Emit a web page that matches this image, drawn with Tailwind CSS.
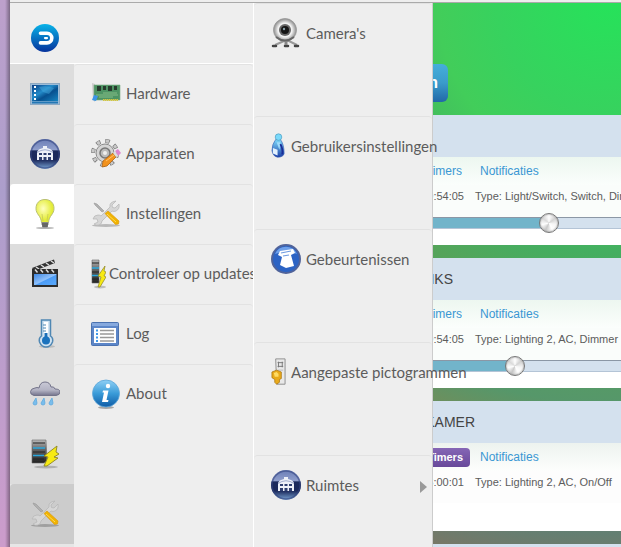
<!DOCTYPE html>
<html lang="nl">
<head>
  <meta charset="UTF-8">
  <meta name="viewport" content="width=device-width, initial-scale=1.0">
  <title>Domoticz</title>
  <script src="https://cdn.jsdelivr.net/npm/@tailwindcss/browser@4"></script>
</head>
<body class="h-screen overflow-hidden flex bg-[#eee] font-['Lato',sans-serif] text-[15px] text-[#5c5c5c]">
  <!-- Shared icons -->
  <svg class="absolute size-0">
    <defs>
      <linearGradient id="g-logo" x2="0" y2="1"><stop stop-color="#08b3e8"/><stop offset="1" stop-color="#06329c"/></linearGradient>
      <linearGradient id="g-screen" x2="1" y2="1"><stop stop-color="#0b3f86"/><stop offset=".4" stop-color="#238ac8"/><stop offset=".6" stop-color="#07508f"/><stop offset="1" stop-color="#1684c0"/></linearGradient>
      <linearGradient id="g-house" x2="0" y2="1"><stop stop-color="#6a7db6"/><stop offset=".35" stop-color="#8e9dcb"/><stop offset=".4" stop-color="#1c2a5c"/><stop offset=".7" stop-color="#1c2a5c"/><stop offset="1" stop-color="#7ba6d6"/></linearGradient>
      <radialGradient id="g-bulb" cx=".4" cy=".4"><stop stop-color="#ffffc0"/><stop offset="1" stop-color="#e3ec38"/></radialGradient>
      <linearGradient id="g-clap" x2="1" y2="1"><stop stop-color="#3f86e0"/><stop offset=".5" stop-color="#8fc1fb"/><stop offset=".55" stop-color="#4c9cf6"/><stop offset="1" stop-color="#5aaafc"/></linearGradient>
      <linearGradient id="g-cloud" x2="0" y2="1"><stop stop-color="#c9c9d6"/><stop offset=".6" stop-color="#b3b3c4"/><stop offset="1" stop-color="#74748c"/></linearGradient>
      <linearGradient id="g-server" x2="0" y2="1"><stop stop-color="#bbb"/><stop offset=".4" stop-color="#666"/><stop offset="1" stop-color="#222"/></linearGradient>
      <linearGradient id="g-info" x2="0" y2="1"><stop stop-color="#8fd0f5"/><stop offset=".5" stop-color="#3a9bd8"/><stop offset="1" stop-color="#0f5ca6"/></linearGradient>
      <radialGradient id="g-cam"><stop stop-color="#bbb"/><stop offset=".6" stop-color="#f4f4f4"/><stop offset="1" stop-color="#8a8a8a"/></radialGradient>
      <linearGradient id="g-user" x2="0" y2="1"><stop stop-color="#7fdcfb"/><stop offset="1" stop-color="#1c3fa8"/></linearGradient>
    </defs>
    <symbol id="i-house" viewBox="0 0 30 30">
      <circle cx="15" cy="15" r="15" fill="url(#g-house)"/>
      <circle cx="15" cy="15" r="14" fill="none" stroke="#34457f" stroke-width="1.5" opacity=".6"/>
      <path d="M7 13Q8 10 13 9V7h4v2q5 1 6 4v8H7z" fill="#eef1f8"/>
      <path d="M9 14h3v2H9zM13.500 14h3v2h-3zM18 14h3v2h-3zM9 18h3v3H9zM13.500 18h3v3h-3zM18 18h3v3h-3z" fill="#2f3f70"/>
      <path d="M7 13.500Q15 8 23 13.500" fill="none" stroke="#8d9bc4" stroke-width=".8"/>
    </symbol>
    <symbol id="i-tools" viewBox="0 0 30 30">
      <ellipse cx="15" cy="26.500" rx="14" ry="1.500" fill="#000" opacity=".22"/>
      <path d="M3 4l3 1 7 7-2 1-7-7z" fill="#b0b0b0" stroke="#999" stroke-width=".6"/>
      <path d="M25 2l-4 4 .5 2.500 2.500.5 4-4q1 5-3 7-2 1-4 0L11 22q0 3-3 4-3 1-5-1l4-2-1-3-4 0q1-4 5-4 2 0 3 1L19 8q-1-5 6-6z" fill="#d6d6d6" stroke="#b4b4b4" stroke-width=".7"/>
      <path d="M14 14.500l3-2.500 11 10-.5 3-3 .5z" fill="#f0b400" stroke="#dd9a14" stroke-width=".7"/>
      <path d="M16 15l9 8" stroke="#ffd95a" stroke-width="1"/>
    </symbol>
    <symbol id="i-update" viewBox="0 0 30 30">
      <ellipse cx="16" cy="28" rx="12" ry="1.500" fill="#000" opacity=".2"/>
      <path d="M2 1h14l1 21-3 2H2z" fill="url(#g-server)" stroke="#666" stroke-width=".6"/>
      <path d="M3 4h12M3 13h12M3 20h11" stroke="#222" stroke-width="1.200"/>
      <path d="M3 9h12M3 16.500h11" stroke="#2aa6dc" stroke-width="1.600"/>
      <path d="M27 7L14 17l4 1-4 9 3 0 11-8-4-1 5-3-3-2z" fill="#f7ea14" stroke="#8b8324" stroke-width=".9"/>
    </symbol>
    <symbol id="i-update-slim" viewBox="0 0 15 30">
      <ellipse cx="9" cy="28" rx="6" ry="1.500" fill="#000" opacity=".2"/>
      <path d="M1 1h7v23H1z" fill="url(#g-server)" stroke="#666" stroke-width=".6"/>
      <path d="M1 4h7M1 13h7M1 20h7" stroke="#222" stroke-width="1.200"/>
      <path d="M1 9h7M1 16.500h7" stroke="#2aa6dc" stroke-width="1.600"/>
      <path d="M14 7L7 17l3 1-3 10h2l6-10-2-1 2-4-2-1z" fill="#f7ea14" stroke="#8b8324" stroke-width=".7"/>
    </symbol>
  </svg>

  <!-- Desktop edge -->
  <div class="w-[10px] shrink-0 bg-linear-to-b from-[#bda0cb] via-[#ac9ecb] via-35% to-[#cc9ccb]">
    <div class="h-full bg-linear-to-r from-transparent from-50% to-black/35"></div>
  </div>

  <div class="flex-1 min-w-0 flex flex-col">
    <div class="h-[3px] shrink-0 border-b border-[#aaa]"></div>
    <div class="flex-1 min-h-0 flex">

      <!-- Main menu -->
      <div class="w-[243px] shrink-0 flex flex-col">
        <a href="#" class="h-[61px] shrink-0 pl-[21px] pt-[10px] flex items-center border-b border-white" aria-label="Domoticz">
          <svg class="size-7" viewBox="0 0 28 28">
            <circle cx="14" cy="14" r="14" fill="url(#g-logo)"/>
            <path d="M9.500 9.300h6.500a4.800 4.800 0 0 1 0 9.600H9.500" fill="none" stroke="#fff" stroke-width="3.600" stroke-linecap="round"/>
            <path d="M14 14.100h2" stroke="#fff" stroke-width="2.200" stroke-linecap="round"/>
          </svg>
        </a>
        <div class="flex-1 min-h-0 flex">
          <nav class="w-16 shrink-0 bg-[#e6e6e6]">
            <a href="#" class="h-[60px] pl-5 flex items-center bg-[#ddd]" aria-label="Dashboard">
              <svg class="size-[30px]" viewBox="0 0 30 30">
                <rect x=".5" y="4.500" width="29" height="21" fill="#9cbcd8" stroke="#8ea9c2"/>
                <rect x="2" y="6" width="26" height="16" fill="url(#g-screen)"/>
                <path d="M2 23.500h26" stroke="#2377b4" stroke-width="2"/>
                <path d="M5 7v2m0 2v2m0 2v2m0 2v2" stroke="#fff" stroke-width="2"/>
                <path d="M9 8q8-2 15 1l-5 6-6-2z" fill="#51b5e6" opacity=".4"/>
              </svg>
            </a>
            <a href="#" class="h-[60px] pl-5 flex items-center bg-[#ddd]" aria-label="Ruimtes"><svg class="size-[30px]"><use href="#i-house"/></svg></a>
            <a href="#" class="h-[60px] pl-5 flex items-center bg-white rounded-tl-sm" aria-label="Schakelaars">
              <svg class="size-[30px]" viewBox="0 0 30 30">
                <ellipse cx="15" cy="29" rx="9" ry="1" fill="#000" opacity=".3"/>
                <path d="M15 .5c-6 0-9 4-9 9 0 6 5 7 5.500 14h7C19 16.500 24 15.500 24 9.500c0-5-3-9-9-9z" fill="url(#g-bulb)" stroke="#b9bf72"/>
                <path d="M13 22l-1-7m5 7l1-7" stroke="#c6ca55" stroke-width=".8"/>
                <path d="M11.500 23h7l-1 5.500h-5z" fill="#888"/>
                <path d="M11.500 25h7m-6.500 2h6" stroke="#444"/>
              </svg>
            </a>
            <a href="#" class="h-[60px] pl-5 flex items-center bg-[#ddd]" aria-label="Scenes">
              <svg class="size-[30px]" viewBox="0 0 30 30">
                <path d="M2 9L24 .5l1 3.500L4 12z" fill="#333"/>
                <path d="M6 8l3 2m2-4l3 2m2-4l3 2m2-4l3 2" stroke="#ddd" stroke-width="1.500"/>
                <path d="M2 10h26v18H2z" fill="#2c2c2c"/>
                <path d="M5 10.500l2.500 3m3-3l2.500 3m3-3l2.500 3m3-3l2.500 3" stroke="#ddd" stroke-width="1.500"/>
                <path d="M4 15h22.500v11H4z" fill="url(#g-clap)"/>
              </svg>
            </a>
            <a href="#" class="h-[60px] pl-5 flex items-center bg-[#ddd]" aria-label="Temperatuur">
              <svg class="size-[30px]" viewBox="0 0 30 30">
                <ellipse cx="17" cy="27.500" rx="8" ry="1.500" fill="#000" opacity=".15"/>
                <path d="M11.500 1h9v16q3 2 2 6-2 5-6.500 5t-6.500-5q-1-4 2-6z" fill="#cfe2f1" stroke="#4f87b3" stroke-width="1.500"/>
                <path d="M14 3h4v14h-4z" fill="#fff"/>
                <path d="M13 6h3m-3 3h3m-3 3h3" stroke="#4f87b3"/>
                <path d="M16 14v6" stroke="#1a6fb8" stroke-width="3"/>
                <circle cx="16" cy="21.500" r="4" fill="#1a72bd"/>
              </svg>
            </a>
            <a href="#" class="h-[60px] pl-5 flex items-center bg-[#ddd]" aria-label="Weer">
              <svg class="size-[30px]" viewBox="0 0 30 30">
                <path d="M4 16.500q-4-1-3.500-4T5 9q2-1 4 0 1-6 6-6t6 5q3-1 4 2 5 0 5 3t-4 3.500z" fill="url(#g-cloud)" stroke="#73738a"/>
                <path d="M5 19l-3 5q0 2 2 2t2-2zM13 19l-3 5q0 2 2 2t2-2zM21 19l-3 5q0 2 2 2t2-2z" fill="#79bdec" stroke="#5fa9de" stroke-width=".8" transform="translate(1)"/>
              </svg>
            </a>
            <a href="#" class="h-[60px] pl-5 flex items-center bg-[#ddd]" aria-label="Overige"><svg class="size-[30px]"><use href="#i-update"/></svg></a>
            <a href="#" class="h-[60px] pl-5 flex items-center bg-[#ccc] rounded-tl-sm" aria-label="Instellingen"><svg class="size-[30px]"><use href="#i-tools"/></svg></a>
          </nav>

          <!-- Settings submenu -->
          <ul class="flex-1 min-w-0 whitespace-nowrap">
            <li><a href="#" class="h-[60px] pl-[17px] pb-[2px] flex items-center gap-[5px] border-t border-[#e2e2e2] rounded-t-sm">
              <svg class="w-[30px] h-[30px] shrink-0" viewBox="0 0 30 30">
                <path d="M1 4l3 1v18l-2-2z" fill="#ccc"/>
                <path d="M3 6h26v15H3z" fill="#4d9463" stroke="#79a983" stroke-width=".6"/>
                <path d="M6 7h4v5H6zm6 0h3v4h-3zm5 0h4v5h-4zm6 0h3v4h-3z" fill="#283b2e"/>
                <path d="M5 16h22M8 18h14M12 14h14" stroke="#86bd88"/>
                <path d="M12 21h15" stroke="#d5c640" stroke-width="2" stroke-dasharray="1.500 .5"/>
                <path d="M3 16l4 1-2 5-4-1z" fill="#3b95ea"/>
              </svg>
              Hardware</a></li>
            <li><a href="#" class="h-[60px] pl-[17px] pb-[2px] flex items-center gap-[5px] border-t border-[#e2e2e2] rounded-t-sm">
              <svg class="w-[30px] h-[30px] shrink-0" viewBox="0 0 30 30">
                <circle cx="14" cy="14" r="12" fill="none" stroke="#777" stroke-width="4" stroke-dasharray="4.400 5.025"/>
                <circle cx="14" cy="14" r="12" fill="none" stroke="#c9c9c9" stroke-width="3" stroke-dasharray="3 6.425" stroke-dashoffset="-.7"/>
                <circle cx="14" cy="14" r="9" fill="#d4d4d4" stroke="#8a8a8a"/>
                <circle cx="14" cy="14" r="5" fill="#bbb" stroke="#777" stroke-width="1.500"/>
                <circle cx="14" cy="14" r="2" fill="#eee"/>
                <path d="M12 22l10-8 3 4-9 9-5 1z" fill="#f2921d" stroke="#b06415" stroke-width=".8"/>
                <path d="M15 22l8-6" stroke="#ffc46b"/>
                <path d="M24 12l3-2 3 4-3 3z" fill="#dc85cf"/>
                <path d="M22 14l2-2 3 5-2 1z" fill="#ddd"/>
              </svg>
              Apparaten</a></li>
            <li><a href="#" class="h-[60px] pl-[17px] pb-[2px] flex items-center gap-[5px] border-t border-[#e2e2e2] rounded-t-sm">
              <svg class="w-[30px] h-[30px] shrink-0"><use href="#i-tools"/></svg>
              Instellingen</a></li>
            <li><a href="#" class="h-[60px] pl-[17px] pb-[2px] flex items-center gap-[3px] border-t border-[#e2e2e2] rounded-t-sm">
              <svg class="w-[15px] h-[30px] shrink-0"><use href="#i-update-slim"/></svg>
              Controleer op updates</a></li>
            <li><a href="#" class="h-[60px] pl-[17px] pb-[2px] flex items-center gap-[5px] border-t border-[#e2e2e2] rounded-t-sm">
              <svg class="w-[30px] h-[30px] shrink-0" viewBox="0 0 30 30">
                <rect x=".5" y="3.500" width="27" height="23" rx="1" fill="#5c86c8" stroke="#4b72b0"/>
                <path d="M1 4h26v3H1z" fill="#86a9de"/>
                <path d="M3 9h22v15H3z" fill="#fff"/>
                <path d="M5 11.500h2m-2 3.500h2m-2 3.500h2M5 22h2" stroke="#3f98ea" stroke-width="2"/>
                <path d="M9 11.500h14m-14 3.500h14m-14 3.500h14M9 22h14" stroke="#999" stroke-width="1.500"/>
              </svg>
              Log</a></li>
            <li><a href="#" class="h-[60px] pl-[17px] pb-[2px] flex items-center gap-[5px] border-t border-[#e2e2e2] rounded-t-sm">
              <svg class="w-[30px] h-[30px] shrink-0" viewBox="0 0 30 30">
                <ellipse cx="15" cy="28.500" rx="8" ry="1.500" fill="#000" opacity=".3"/>
                <circle cx="15" cy="14.500" r="13.500" fill="url(#g-info)" stroke="#5aa5d8" stroke-width=".8"/>
                <circle cx="17" cy="7" r="2.200" fill="#fff"/>
                <path d="M12 11.500h5.500l-2 9.500 2 0-.5 2h-6l2-9.500-1.500 0z" fill="#fff"/>
              </svg>
              About</a></li>
          </ul>
        </div>
      </div>

      <!-- More options -->
      <ul class="relative z-10 w-[180px] shrink-0 bg-[#eee] border-l border-l-white border-r border-r-[#ccc] whitespace-nowrap">
        <li class="h-[113px] border-t border-[#e2e2e2] rounded-t-sm"><a href="#" class="h-[60px] pl-[17px] pb-[2px] flex items-center gap-[5px]">
          <svg class="w-[30px] h-[30px] shrink-0" viewBox="0 0 30 30">
            <path d="M4 27l9-4h5l8 4" fill="none" stroke="#999" stroke-width="2"/>
            <path d="M2 28h3m9 0h3m7 0h3" stroke="#444" stroke-width="2.500" stroke-linecap="round"/>
            <path d="M15 22v5" stroke="#888" stroke-width="3"/>
            <circle cx="14" cy="12" r="11.500" fill="url(#g-cam)" stroke="#999" stroke-width=".8"/>
            <path d="M5 19q9 7 18 0" fill="none" stroke="#666" stroke-width="2"/>
            <circle cx="14" cy="12" r="6" fill="#666"/>
            <circle cx="14" cy="12" r="4" fill="#151515"/>
            <circle cx="13" cy="11" r="1.200" fill="#8aa0a8"/>
          </svg>
          Camera's</a></li>
        <li class="h-[113px] border-t border-[#e2e2e2] rounded-t-sm"><a href="#" class="h-[60px] pl-[17px] pb-[2px] flex items-center gap-[5px]">
          <svg class="w-[15px] h-[30px] shrink-0" viewBox="0 0 16 30">
            <path d="M5 8Q1 13 1 20q1 6 6 7 6 0 7-4 0-10-4-15z" fill="url(#g-user)" stroke="#2f56ae" stroke-width=".6"/>
            <circle cx="8" cy="5.500" r="3.500" fill="#7ad9fa" stroke="#4797bd" stroke-width=".7"/>
            <path d="M6 11l4 0-1 8z" fill="#9fdcfb"/>
            <path d="M2 17l5 2v6l-5-2z" fill="#e2f1ff"/>
            <path d="M10 13q3 5 2 11" fill="none" stroke="#1b2c96" stroke-width="2"/>
          </svg>
          Gebruikersinstellingen</a></li>
        <li class="h-[113px] border-t border-[#e2e2e2] rounded-t-sm"><a href="#" class="h-[60px] pl-[17px] pb-[2px] flex items-center gap-[5px]">
          <svg class="w-[30px] h-[30px] shrink-0" viewBox="0 0 30 30">
            <circle cx="15" cy="15" r="14" fill="#2c63c4" stroke="#50639a" stroke-width="2"/>
            <path d="M4 10a12 12 0 0 1 22 0q-10-5-22 0z" fill="#6ea0ea"/>
            <path d="M9 7l13-2 2 4-4 2 3 11-8 2-6-3 2-8-4-2z" fill="#fff"/>
            <path d="M10 9l10-2m-8 5l6-1" stroke="#6f9be0" stroke-width="1.200"/>
          </svg>
          Gebeurtenissen</a></li>
        <li class="h-[113px] border-t border-[#e2e2e2] rounded-t-sm"><a href="#" class="h-[60px] pl-[17px] pb-[2px] flex items-center gap-[5px]">
          <svg class="w-[15px] h-[30px] shrink-0" viewBox="0 0 16 30">
            <path d="M5 1h10v27H6z" fill="#e8e8e8" stroke="#8d8d8d"/>
            <path d="M7 5h6M7 9h6M8 4v6m4-6v6" stroke="#777"/>
            <path d="M7 13h6" stroke="#bbb"/>
            <path d="M1 15l5-2 5 2v7l-2 1v3l-3 2-2-2v-3l-3-2z" fill="#e9aa1b" stroke="#a8730d" stroke-width=".8"/>
            <path d="M3 16l3-1 2 2v3l-4 0z" fill="#ffdc66"/>
          </svg>
          Aangepaste pictogrammen</a></li>
        <li class="border-t border-[#e2e2e2] rounded-t-sm"><a href="#" class="h-[60px] pl-[17px] pr-[5px] pb-[2px] flex items-center gap-[5px]">
          <svg class="w-[30px] h-[30px] shrink-0"><use href="#i-house"/></svg>
          Ruimtes
          <svg class="w-[7px] h-3 ml-auto mt-1" viewBox="0 0 7 12"><path d="M0 0l7 6-7 6z" fill="#999"/></svg></a></li>
      </ul>

      <!-- Devices -->
      <main class="flex-1 min-w-0 overflow-hidden font-['Liberation_Sans',sans-serif] text-xs bg-[radial-gradient(circle_at_175px_0px,#26e25a,#37d25e_110px,#42cd5a_170px,#44ae60_250px,#55a45a_300px,#56976a_400px,#6a905f_430px,#637f72_530px,#787766_570px)]">
        <div class="h-28 pt-[61px]">
          <div class="w-[15px] h-[38px] flex items-center justify-end overflow-hidden rounded-r-md bg-linear-to-b from-[#45aedb] via-[#3a9bcb] via-50% to-[#2268a8]">
            <button type="button" class="shrink-0 pr-[10px] text-base font-bold text-white">Aan</button>
          </div>
        </div>

        <div class="flex flex-col gap-[13px] whitespace-nowrap">
          <section class="h-[130px] bg-white">
            <div class="h-[42px] bg-[#d4e1ee]"></div>
            <div class="h-7 flex items-center gap-[18px] bg-linear-to-b from-[#edf7f0] to-[#fbfefc] text-[#3a97d3]">
              <div class="w-[29px] flex justify-end overflow-hidden"><a href="#">Timers</a></div>
              <a href="#">Notificaties</a>
            </div>
            <div class="h-8 pb-[10px] flex items-center gap-[11px] bg-[#fafdfb] text-[11px]">
              <div class="w-[31px] shrink-0 flex justify-end overflow-hidden"><span>19:54:05</span></div>
              <span>Type: Light/Switch, Switch, Dimmer</span>
            </div>
            <div class="h-3 border-y border-t-[#8b97a5] border-b-[#b4c4d6]" style="background: linear-gradient(to right, #72b4ca 61%, #d4e1ee 61%)">
              <input type="range" value="63" aria-label="Dimmer" class="block w-full h-5 -mt-[5px] appearance-none bg-transparent [&::-webkit-slider-thumb]:appearance-none [&::-webkit-slider-thumb]:size-5 [&::-webkit-slider-thumb]:rounded-full [&::-webkit-slider-thumb]:border [&::-webkit-slider-thumb]:border-[#777] [&::-webkit-slider-thumb]:bg-[conic-gradient(#fff,#d4d4d4,#f6f6f6,#fff,#c8c8c8,#fff,#dadada,#fff)] [&::-webkit-slider-thumb]:shadow-[inset_0_0_2px_#888]">
            </div>
          </section>

          <section class="h-[130px] bg-white">
            <h2 class="h-[42px] flex items-center text-sm text-[#444] bg-[#d4e1ee]"><span class="w-5 flex justify-end overflow-hidden"><span>LINKS</span></span></h2>
            <div class="h-7 flex items-center gap-[18px] bg-linear-to-b from-[#edf7f0] to-[#fbfefc] text-[#3a97d3]">
              <div class="w-[29px] flex justify-end overflow-hidden"><a href="#">Timers</a></div>
              <a href="#">Notificaties</a>
            </div>
            <div class="h-8 pb-[10px] flex items-center gap-[11px] bg-[#fafdfb] text-[11px]">
              <div class="w-[31px] shrink-0 flex justify-end overflow-hidden"><span>19:54:05</span></div>
              <span>Type: Lighting 2, AC, Dimmer</span>
            </div>
            <div class="h-3 border-y border-t-[#8b97a5] border-b-[#b4c4d6]" style="background: linear-gradient(to right, #72b4ca 43%, #d4e1ee 43%)">
              <input type="range" value="43" aria-label="Dimmer links" class="block w-full h-5 -mt-[5px] appearance-none bg-transparent [&::-webkit-slider-thumb]:appearance-none [&::-webkit-slider-thumb]:size-5 [&::-webkit-slider-thumb]:rounded-full [&::-webkit-slider-thumb]:border [&::-webkit-slider-thumb]:border-[#777] [&::-webkit-slider-thumb]:bg-[conic-gradient(#fff,#d4d4d4,#f6f6f6,#fff,#c8c8c8,#fff,#dadada,#fff)] [&::-webkit-slider-thumb]:shadow-[inset_0_0_2px_#888]">
            </div>
          </section>

          <section class="h-[130px] bg-white">
            <h2 class="h-[42px] flex items-center text-sm text-[#444] bg-[#d4e1ee]"><span class="w-[42px] flex justify-end overflow-hidden"><span>KAMER</span></span></h2>
            <div class="h-7 flex items-center gap-[10px] bg-linear-to-b from-[#edf3ef] to-[#fdfefd] text-[#3a97d3]">
              <div class="w-[37px] h-[19px] flex items-center justify-end overflow-hidden rounded-r bg-linear-to-b from-[#8566b5] to-[#68499a]">
                <a href="#" class="pr-[7px] text-[11px] font-bold text-white">Timers</a>
              </div>
              <a href="#">Notificaties</a>
            </div>
            <div class="h-8 pb-[10px] flex items-center gap-[11px] bg-[#fdfdfd] text-[11px]">
              <div class="w-[31px] shrink-0 flex justify-end overflow-hidden"><span>18:00:01</span></div>
              <span>Type: Lighting 2, AC, On/Off</span>
            </div>
          </section>

          <section class="h-[130px] bg-[#d4e1ee]"></section>
        </div>
      </main>
    </div>
  </div>
</body>
</html>
